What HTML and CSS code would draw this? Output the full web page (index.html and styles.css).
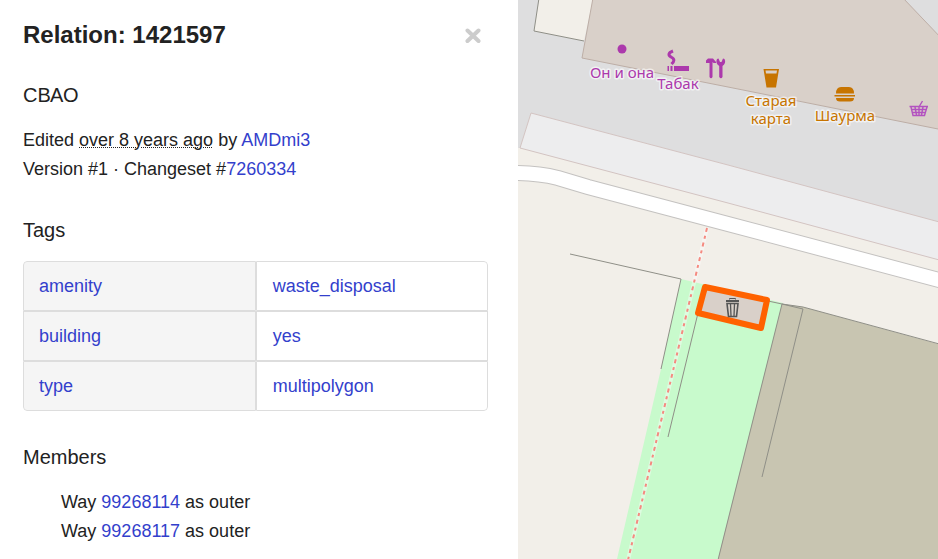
FILE: index.html
```
<!DOCTYPE html>
<html lang="en">
<head>
<meta charset="utf-8">
<title>Relation: 1421597</title>
<meta name="viewport" content="width=device-width, initial-scale=1.0">
<link rel="stylesheet" href="styles.css">
</head>

<body>
<div class="content">

<div class="sidebar">
  <div class="header">
    <h2>Relation: 1421597</h2>
    <button class="close" type="button" aria-label="Close">
      <svg viewBox="0 0 16 16" width="16" height="16"><path d="M2.5 3.5L13.5 14M13.5 3.5L2.5 14"/></svg>
    </button>
  </div>

  <div class="section">
    <h4>СВАО</h4>
    <p>Edited <abbr>over 8 years ago</abbr> by <a href="#user">AMDmi3</a></p>
    <p>Version #1 · Changeset #<a href="#changeset">7260334</a></p>
  </div>

  <div class="section">
    <h4>Tags</h4>
    <table class="tags">
      <tr><th scope="row"><a href="#amenity">amenity</a></th><td><a href="#waste_disposal">waste_disposal</a></td></tr>
      <tr><th scope="row"><a href="#building">building</a></th><td><a href="#yes">yes</a></td></tr>
      <tr><th scope="row"><a href="#type">type</a></th><td><a href="#multipolygon">multipolygon</a></td></tr>
    </table>
  </div>

  <div class="section">
    <h4>Members</h4>
    <ul class="members">
      <li>Way <a href="#way1">99268114</a> as outer</li>
      <li>Way <a href="#way2">99268117</a> as outer</li>
    </ul>
  </div>
</div>

<div class="map">
<svg viewBox="0 0 420 559" preserveAspectRatio="xMinYMin slice" role="img" aria-label="Map">
  <!-- parking -->
  <path fill="#dededf" d="M0 0H420V222L210 165L13 113L2 148H0Z"/>
  <path fill="#ededee" stroke="#d3c4c2" d="M13 113L210 165L425 223V261L210 203L2 148Z"/>

  <!-- buildings -->
  <path fill="#f2efe9" d="M21 0L16 31L66 41L75 0Z"/>
  <path class="fence" d="M21 -2L16 31L66 41"/>
  <path fill="#d9d0c9" stroke="#bdaea6" d="M75 -2L64 58L210 87L425 130V40L385 -2Z"/>

  <!-- road -->
  <path class="road-casing" d="M-5 173Q20 173 40 178L70 187L210 224L425 281"/>
  <path class="road" d="M-5 173Q20 173 40 178L70 187L210 224L425 281"/>

  <!-- grass and garages -->
  <path fill="#c8facc" d="M163 279L265 303L200 559H99L143 369Z"/>
  <path fill="#c8c5b1" d="M264 304L285 307L420 344V559H200Z"/>
  <path class="fence" d="M52 254L163 279L143 369"/>
  <path class="fence" d="M180 313L150 437"/>
  <path class="fence" d="M250 301L264 304L285 307L425 345"/>
  <path class="fence" d="M264 304L200 560"/>
  <path class="fence" d="M264 304L285 309L244 477"/>

  <!-- footway -->
  <path class="footway-casing" d="M189 228L110 560"/>
  <path class="footway" d="M189 228L110 560"/>

  <!-- selected relation -->
  <path fill="#d9d0c9" stroke="#ff6200" stroke-width="6" stroke-linejoin="round" d="M187 287L249 300L243 328L180 313Z"/>
  <g fill="none" stroke="#555">
    <path stroke-width="2" d="M208 301H221"/>
    <path d="M211.500 299.500V298.500H217.500V299.500"/>
    <path stroke-width="1.600" d="M209 303.500H220L218.500 316.500H210.500Z"/>
    <path stroke-width="1.300" d="M212.500 304L213 316M216.500 304L216 316"/>
  </g>

  <!-- shops -->
  <g class="shop">
    <circle cx="104" cy="49" r="4.500"/>
    <path d="M156 66H171V71H156ZM152.500 66H154.500V71H152.500ZM149.500 66H151V71H149.500Z"/>
    <path fill="none" stroke="#ac39ac" stroke-width="3" d="M155 51C150 53 150 55 153 57C157 59 156.500 61 153.500 64"/>
    <path d="M188 60.500L190 58.500H195L198 62V63H195.500L194.500 62V77Q193 79.500 191.500 77V63H188Z"/>
    <path d="M199 59L200.500 58.500L202 62H203.500L205 58.500L206.500 59Q208.500 63 204.500 66V77Q203 79.500 201.200 77V66Q197 63 199 59Z"/>
    <path fill="none" stroke="#b352c0" stroke-width="1.400" d="M391.500 106.500H410M393 107L395 115.500H406.500L409 107M397 107L398.500 115M401 107V115M405 107L403.500 115M393.500 109.500H408M394 112.500H407.500M401.500 106L404.500 101"/>
    <text x="104" y="78">Он и она</text>
    <text x="160" y="89">Табак</text>
  </g>

  <!-- food -->
  <g class="food">
    <path fill-rule="evenodd" d="M245.500 69H261L258 87.500H248.500ZM247.500 70.500L248 73.500H258.500L259 70.500Z"/>
    <path d="M318 93.500Q318 87 323 87H331Q336 87 336 93.500ZM316.500 95H337V96.500H316.500ZM318 98H336Q336 101.500 332 101.500H322Q318 101.500 318 98Z"/>
    <text x="253" y="106">Старая</text>
    <text x="253" y="124">карта</text>
    <text x="327" y="121">Шаурма</text>
  </g>
</svg>
</div>

</div>
</body>
</html>
```
FILE: styles.css
```
* {
 box-sizing:border-box;
}
body {
 margin:0;
 color:#222;
 background:#fff;
 font:18px/29px "Liberation Sans", Arial, sans-serif;
}
a {
 color:#333fcc;
 text-decoration:none;
}
h2, h4, p {
 margin:0;
}
h2 {
 font-size:24px;
 line-height:30px;
}
h4 {
 margin-bottom:16px;
 font-size:20px;
 font-weight:normal;
 line-height:30px;
}
abbr {
 text-decoration:underline dotted 1px;
}
.content {
 display:grid;
 grid-template-columns:21fr 17fr;
 min-height:100vh;
}
.sidebar {
 padding:20px 30px 0 23px;
}
.header {
 display:flex;
 justify-content:space-between;
 align-items:center;
 margin-bottom:30px;
 padding-right:7px;
}
.close {
 display:flex;
 padding:0;
 border:0;
 background:none;
 cursor:pointer;
}
.close path {
 fill:none;
 stroke:#ccc;
 stroke-width:4;
 stroke-linecap:round;
}
.section + .section {
 margin-top:31px;
}
.tags {
 width:100%;
 border-spacing:0;
 table-layout:fixed;
 border-radius:4px;
 overflow:hidden;
}
.tags th, .tags td {
 height:50px;
 padding:0 15px;
 border:1px solid #ddd;
 font-weight:normal;
 text-align:left;
}
.tags th {
 background:#f5f5f5;
}
.tags td {
 padding-left:16px;
}
.tags tr:first-child th {border-top-left-radius:4px;}
.tags tr:first-child td {border-top-right-radius:4px;}
.tags tr:last-child th {border-bottom-left-radius:4px;}
.tags tr:last-child td {border-bottom-right-radius:4px;}
.members {
 margin:0;
 padding:0 0 0 38px;
 list-style:none;
}
.map {
 position:relative;
 overflow:hidden;
 background:#f2efe9;
}
.map svg {
 display:block;
 position:absolute;
 width:100%;
 height:100%;
}
.fence {
 fill:none;
 stroke:#8f8f87;
}
.road-casing {
 fill:none;
 stroke:#c4c2c0;
 stroke-width:16;
}
.road {
 fill:none;
 stroke:#fff;
 stroke-width:14;
}
.footway-casing {
 fill:none;
 stroke:#fff;
 stroke-width:4;
 stroke-opacity:0.4;
}
.footway {
 fill:none;
 stroke:#f58a80;
 stroke-width:2;
 stroke-dasharray:4 4 3 4;
}
.map text {
 font:15px "Noto Sans", sans-serif;
 text-anchor:middle;
 paint-order:stroke;
 stroke:#fff;
 stroke-opacity:0.6;
 stroke-width:3;
 stroke-linejoin:round;
}
.shop {fill:#ac39ac;}
.food {fill:#c77400;}
```
